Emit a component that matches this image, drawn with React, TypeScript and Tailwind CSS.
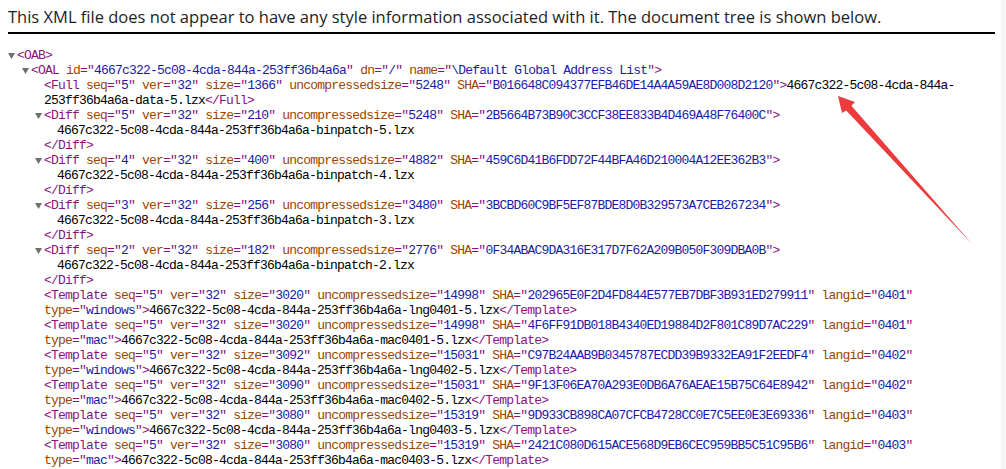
import React from 'react';

type Tok = [string, string];

interface XmlLine {
  x: number;
  toggle?: boolean;
  toks: Tok[];
}

const tokenClass: Record<string, string> = {
  t: 'text-[#881280]',
  a: 'text-[#994500]',
  v: 'text-[#1a1aa6]',
  x: 'text-black',
};

const indentClass: Record<number, string> = {
  17: 'pl-[7px]',
  31: 'pl-[21px]',
  44: 'pl-[34px]',
  57: 'pl-[47px]',
};

const ID = '4667c322-5c08-4cda-844a-253ff36b4a6a';

function attr(name: string, value: string, last = false): Tok[] {
  const toks: Tok[] = [
    ['a', name],
    ['t', '="'],
    ['v', value],
    ['t', '"'],
  ];
  if (!last) toks.push(['x', ' ']);
  return toks;
}

function diff(seq: string, size: string, unc: string, sha: string): XmlLine[] {
  return [
    {
      x: 44,
      toggle: true,
      toks: [
        ['t', '<Diff '],
        ...attr('seq', seq),
        ...attr('ver', '32'),
        ...attr('size', size),
        ...attr('uncompressedsize', unc),
        ...attr('SHA', sha, true),
        ['t', '>'],
      ],
    },
    { x: 57, toks: [['x', `${ID}-binpatch-${seq}.lzx`]] },
    { x: 44, toks: [['t', '</Diff>']] },
  ];
}

function template(size: string, unc: string, sha: string, lang: string, type: string, file: string): XmlLine[] {
  return [
    {
      x: 44,
      toks: [
        ['t', '<Template '],
        ...attr('seq', '5'),
        ...attr('ver', '32'),
        ...attr('size', size),
        ...attr('uncompressedsize', unc),
        ...attr('SHA', sha),
        ...attr('langid', lang, true),
      ],
    },
    {
      x: 44,
      toks: [
        ...attr('type', type, true),
        ['t', '>'],
        ['x', `${ID}-${file}-5.lzx`],
        ['t', '</Template>'],
      ],
    },
  ];
}

const lines: XmlLine[] = [
  { x: 17, toggle: true, toks: [['t', '<OAB>']] },
  {
    x: 31,
    toggle: true,
    toks: [
      ['t', '<OAL '],
      ...attr('id', ID),
      ...attr('dn', '/'),
      ...attr('name', '\\Default Global Address List', true),
      ['t', '>'],
    ],
  },
  {
    x: 44,
    toks: [
      ['t', '<Full '],
      ...attr('seq', '5'),
      ...attr('ver', '32'),
      ...attr('size', '1366'),
      ...attr('uncompressedsize', '5248'),
      ...attr('SHA', 'B016648C094377EFB46DE14A4A59AE8D008D2120', true),
      ['t', '>'],
      ['x', '4667c322-5c08-4cda-844a-'],
    ],
  },
  { x: 44, toks: [['x', '253ff36b4a6a-data-5.lzx'], ['t', '</Full>']] },
  ...diff('5', '210', '5248', '2B5664B73B90C3CCF38EE833B4D469A48F76400C'),
  ...diff('4', '400', '4882', '459C6D41B6FDD72F44BFA46D210004A12EE362B3'),
  ...diff('3', '256', '3480', '3BCBD60C9BF5EF87BDE8D0B329573A7CEB267234'),
  ...diff('2', '182', '2776', '0F34ABAC9DA316E317D7F62A209B050F309DBA0B'),
  ...template('3020', '14998', '202965E0F2D4FD844E577EB7DBF3B931ED279911', '0401', 'windows', 'lng0401'),
  ...template('3020', '14998', '4F6FF91DB018B4340ED19884D2F801C89D7AC229', '0401', 'mac', 'mac0401'),
  ...template('3092', '15031', 'C97B24AAB9B0345787ECDD39B9332EA91F2EEDF4', '0402', 'windows', 'lng0402'),
  ...template('3090', '15031', '9F13F06EA70A293E0DB6A76AEAE15B75C64E8942', '0402', 'mac', 'mac0402'),
  ...template('3080', '15319', '9D933CB898CA07CFCB4728CC0E7C5EE0E3E69336', '0403', 'windows', 'lng0403'),
  ...template('3080', '15319', '2421C080D615ACE568D9EB6CEC959BB5C51C95B6', '0403', 'mac', 'mac0403'),
];

function Toggle() {
  return (
    <svg width="7" height="6" viewBox="0 0 7 6" className="ml-px">
      <polygon points="0,0 7,0 3.5,6" fill="#6f6f6f" />
    </svg>
  );
}

export default function App() {
  return (
    <div className="relative w-[1006px] h-[469px] overflow-hidden bg-white flex">
      <div className="flex-1 flex flex-col">
        <div className="ml-2 w-[987px] h-[34px] border-b-2 border-black pt-[5px] text-[16.5px] leading-[24px] text-[#1e1e1e] font-['Open_Sans',sans-serif] whitespace-nowrap">
          This XML file does not appear to have any style information associated with it. The document tree is shown below.
        </div>
        <div className="mt-[14px] font-['Liberation_Mono',monospace] text-[13px] tracking-[-0.8px]">
          {lines.map((line, i) => (
            <div key={i} className={`flex items-center h-[15px] leading-[15px] whitespace-pre ${indentClass[line.x]}`}>
              <span className="w-[10px] flex items-center">{line.toggle && <Toggle />}</span>
              <span>
                {line.toks.map(([k, s], j) => (
                  <span key={j} className={tokenClass[k]}>
                    {s}
                  </span>
                ))}
              </span>
            </div>
          ))}
        </div>
      </div>
      <div className="w-[5px] bg-[#f6f6f6]" />
      <svg className="absolute inset-0 pointer-events-none" width="1006" height="469" viewBox="0 0 1006 469">
        <polygon
          points="838,96 855,102 851.4,105.8 973,245 846.2,110.6 842,113"
          fill="#ec3b3d"
        />
      </svg>
    </div>
  );
}
